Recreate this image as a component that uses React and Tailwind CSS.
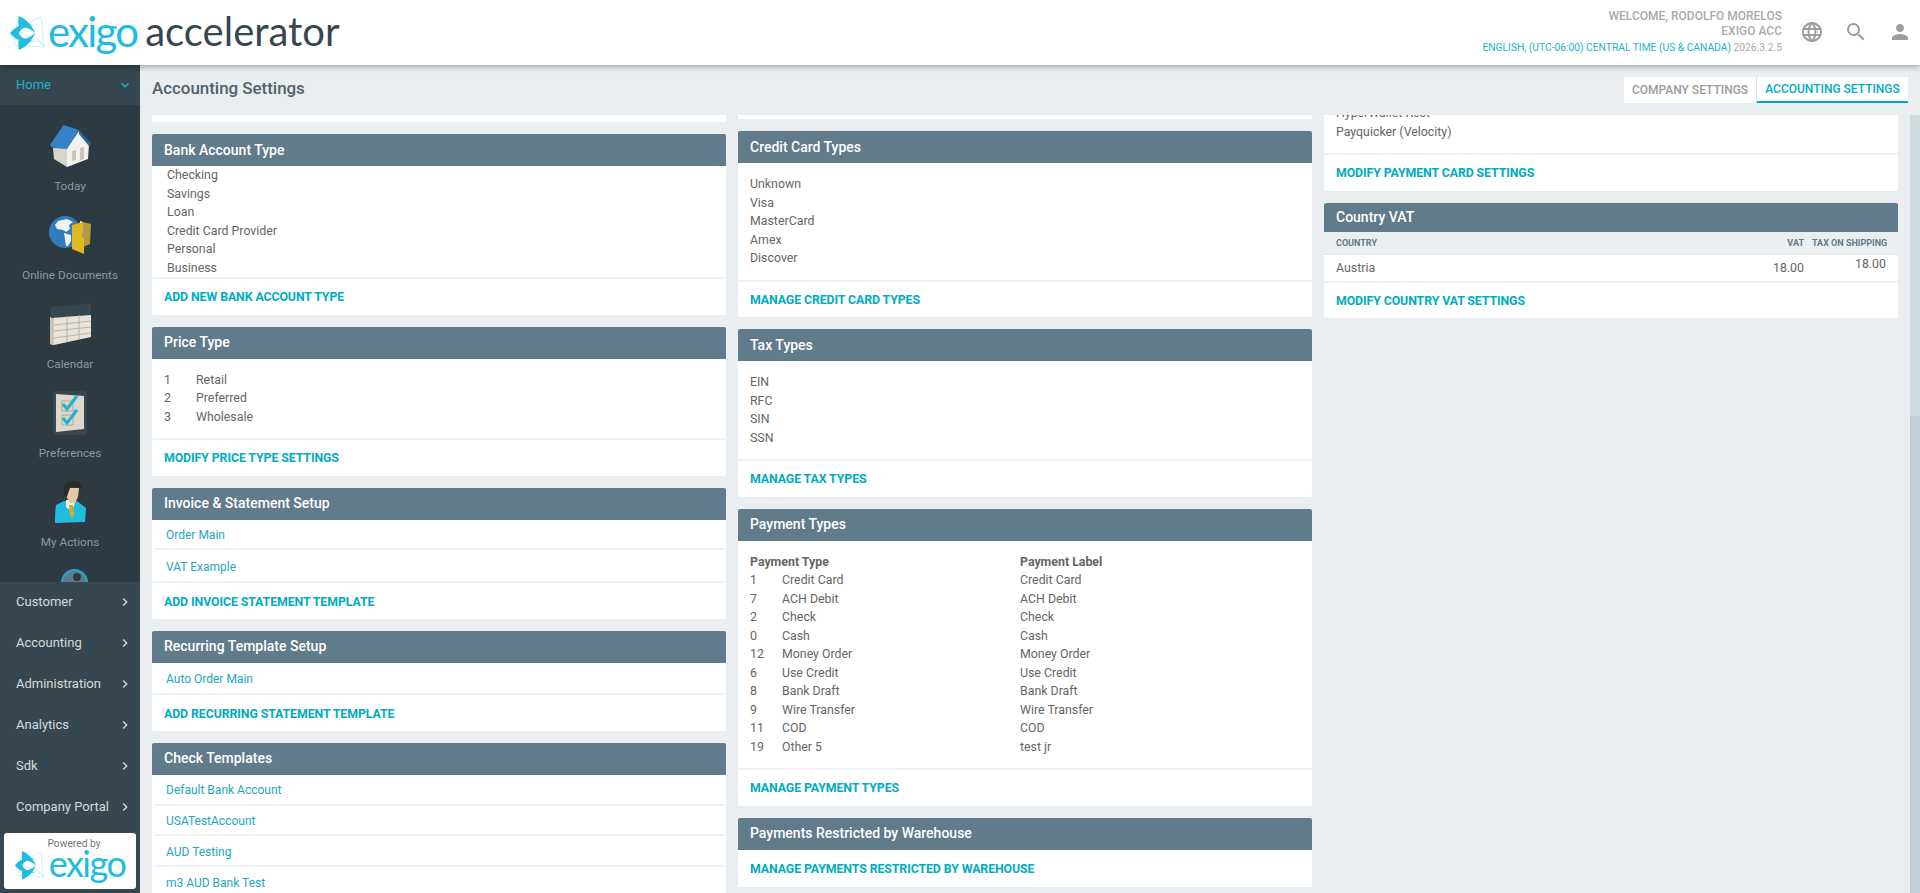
import { MdLanguage, MdSearch, MdPerson, MdKeyboardArrowRight, MdKeyboardArrowDown } from "react-icons/md";

const ExigoMark = ({ className }) => (
  <svg viewBox="0 0 36 34" className={className}>
    <path d="M8 0 L35 31 L4 29 Z M31 1 L34 29 L5 13 Z" fill="none" stroke="#a9e4f3" strokeWidth="0.6" />
    <path d="M0 17 C5 10 14 7 24 9 C15 10 10 13 9 17 C10 21 15 24 24 25 C14 27 5 24 0 17 Z" fill="#22bce0" />
    <path d="M9 0 C16 3 22 9 25 17 C20 12 14 10 9 12 C8 8 8 4 9 0 Z" fill="#22bce0" />
    <path d="M9 34 C16 31 22 25 25 17 C20 22 14 24 9 22 C8 26 8 30 9 34 Z" fill="#22bce0" />
  </svg>
);

const HouseIcon = () => (
  <svg viewBox="0 0 41 42" className="w-[41px] h-[42px]">
    <path d="M3 23 L17 23 L17 42 L4 34 Z" fill="#d9d5cc" />
    <path d="M17 23 L29 6 L39 19 L38 34 L17 42 Z" fill="#f3f1ee" />
    <path d="M22 26 L26 25 L26 35 L22 36 Z M30 23 L34 22 L34 34 L30 35 Z" fill="#c9c5ba" />
    <path d="M29 5 L41 18.5 L39 21 L29 9 Z" fill="#2a6496" />
    <path d="M0 20 L13.5 0 L29 5 L17 24 L3 23 Z" fill="#3582c4" />
  </svg>
);

const DocsIcon = () => (
  <svg viewBox="0 0 42 38" className="w-[42px] h-[38px]">
    <circle cx="16" cy="16" r="16" fill="#2f7cc0" />
    <path d="M9 5 L18 3 L24 6 L20 9 L21 13 L17 16 L14 14 L8 13 L6 9 Z" fill="#f1f4f6" />
    <path d="M15 17 L22 19 L22 25 L19 30 L17 30 L16 23 Z" fill="#f1f4f6" />
    <path d="M31 5 L34 6 L33 34 L29 34 Z" fill="#f3f1ee" />
    <path d="M34 6 L42 8 L41 28 L34 31 Z" fill="#b39a3f" />
    <path d="M23 9 L34 6 L33 20 L35 22 L35 38 L23 33 Z" fill="#dfb822" />
  </svg>
);

const CalendarIcon = () => (
  <svg viewBox="0 0 41 42" className="w-[41px] h-[42px]">
    <path d="M0 14 L41 10 L41 34 L4 42 L0 41 Z" fill="#e8e4da" />
    <path d="M0 14 L4 15 L4 42 L0 41 Z" fill="#c8c4b8" />
    <path d="M1 4 L41 0 L41 12 L1 15 Z" fill="#37474f" />
    <path d="M4 22 L41 18 M4 28 L41 24 M4 35 L41 30 M17 13 L17 39 M29 12 L29 36" stroke="#b9b5a9" strokeWidth="1" fill="none" />
  </svg>
);

const PrefsIcon = () => (
  <svg viewBox="0 0 34 44" className="w-[34px] h-[44px] shrink-0">
    <rect x="0" y="0" width="34" height="44" rx="4" fill="#37474f" />
    <path d="M3 3 L31 5 L31 38 L3 41 Z" fill="#ddd7cc" />
    <rect x="9" y="10" width="11" height="10" fill="none" stroke="#a9a69c" strokeWidth="1" />
    <rect x="9" y="24" width="11" height="10" fill="none" stroke="#a9a69c" strokeWidth="1" />
    <path d="M10 13 L14 18 L24 5" fill="none" stroke="#22b0d0" strokeWidth="3.2" />
    <path d="M10 27 L14 32 L24 19" fill="none" stroke="#22b0d0" strokeWidth="3.2" />
  </svg>
);

const ActionsIcon = () => (
  <svg viewBox="0 0 31 44" className="w-[31px] h-[44px] shrink-0">
    <path d="M9 21 L1 25 C0 32 0 38 0 43 L30 42 L31 28 L22 21 Z" fill="#22bce0" />
    <path d="M11 20 L20 20 L19 27 L15 30 L11 27 Z" fill="#f1efea" />
    <path d="M14 25 L18 25 L19 35 L17 38 L15 35 Z" fill="#d9ae1e" />
    <path d="M11 8 L24 8 L23 17 L20 23 L15 23 L11 16 Z" fill="#e6c9a4" />
    <path d="M10 16 C7 8 9 1 17 1 C22 0 27 2 27 8 C22 7 18 7 15 8 C14 11 13 13 12 17 Z" fill="#2b2b2b" />
  </svg>
);

const PartialIcon = () => (
  <svg viewBox="0 0 27 27" className="w-[27px] h-[27px]">
    <circle cx="13.5" cy="13.5" r="12.5" fill="#5a7d8e" stroke="#22a9c9" strokeWidth="2" />
    <circle cx="16" cy="8" r="4" fill="#2d3a42" />
  </svg>
);

const Card = ({ title, children, footer, small, border = true }) => (
  <div className="bg-white rounded-[2px] mb-3">
    <div className={`${small ? "h-[29px]" : "h-8"} bg-[#607b8a] rounded-t-[2px] flex items-center pl-3 text-[14px] font-medium text-white`}>
      {title}
    </div>
    {children}
    {footer && <CardFooter border={border}>{footer}</CardFooter>}
  </div>
);

const CardFooter = ({ children, border = true }) => (
  <div className={`h-[37.5px] pt-0.5 ${border ? "border-t-2 border-[#eff1f3]" : ""} flex items-center pl-3 text-[12.35px] font-bold uppercase text-[#00acc1] tracking-[-0.1px]`}>
    {children}
  </div>
);

const Lines = ({ items, className = "py-3 pl-3" }) => (
  <div className={`${className} text-[12.35px] leading-[18.5px] text-[#666]`}>
    {items.map((t) => (
      <div key={t}>{t}</div>
    ))}
  </div>
);

const NumLines = ({ items }) => (
  <div className="py-3 pl-3 text-[12.35px] leading-[18.5px] text-[#666]">
    {items.map(([n, t]) => (
      <div key={n} className="flex">
        <span className="w-8">{n}</span>
        <span>{t}</span>
      </div>
    ))}
  </div>
);

const LinkRows = ({ items, last }) => (
  <div>
    {items.map((t, i) => (
      <div
        key={t}
        className={`h-[30.8px] ml-0.5 pl-3 pt-0.5 flex items-center text-[12px] text-[#1ea7bf] ${i === items.length - 1 && !last ? "" : "border-b-2 border-[#eff1f3]"}`}
      >
        {t}
      </div>
    ))}
  </div>
);

const payments = [
  ["1", "Credit Card", "Credit Card"],
  ["7", "ACH Debit", "ACH Debit"],
  ["2", "Check", "Check"],
  ["0", "Cash", "Cash"],
  ["12", "Money Order", "Money Order"],
  ["6", "Use Credit", "Use Credit"],
  ["8", "Bank Draft", "Bank Draft"],
  ["9", "Wire Transfer", "Wire Transfer"],
  ["11", "COD", "COD"],
  ["19", "Other 5", "test jr"],
];

const navItems = ["Customer", "Accounting", "Administration", "Analytics", "Sdk", "Company Portal"];

const SideItem = ({ icon, label }) => (
  <div className="flex flex-col items-center">
    <div className="h-[42px] flex items-center justify-center">{icon}</div>
    <div className="text-[11.75px] leading-[18px] text-[#8f979c] mt-[10px] mb-[19px]">{label}</div>
  </div>
);

export default function App() {
  return (
    <div className="h-[893px] w-[1920px] overflow-hidden flex flex-col bg-[#ebeef1] font-['Roboto',sans-serif]">
      {/* Header */}
      <header className="h-[65px] shrink-0 bg-white flex items-center justify-between relative z-10 shadow-[0_2px_6px_rgba(0,0,0,0.3)]">
        <div className="flex items-center pl-[10px] font-['Lato',sans-serif]">
          <ExigoMark className="w-[36px] h-[34px] mt-[1px]" />
          <span className="ml-[2px] text-[42px] leading-none font-normal tracking-[-1.8px] text-[#1fbbe0] -mt-[4px]">exigo</span>
          <span className="ml-[8px] text-[40px] leading-none font-normal text-[#37474f] -mt-[4px]">accelerator</span>
        </div>
        <div className="flex items-center -mt-[2px]">
          <div className="text-right text-[#aaa] font-medium mr-[18px] uppercase">
            <div className="text-[12px] leading-[15px]">Welcome, Rodolfo Morelos</div>
            <div className="text-[12px] leading-[15px] mt-[0.5px]">Exigo Acc</div>
            <div className="text-[10.25px] leading-[15px] mt-[0.5px] font-normal">
              <span className="text-[#1cb3cb]">English, (UTC-06:00) Central Time (US &amp; Canada)</span> 2026.3.2.5
            </div>
          </div>
          <MdLanguage className="w-6 h-6 text-[#9e9e9e]" />
          <MdSearch className="w-6 h-6 text-[#9e9e9e] ml-5" />
          <MdPerson className="w-6 h-6 text-[#9e9e9e] ml-5 mr-2" />
        </div>
      </header>

      <div className="flex-1 flex min-h-0">
        {/* Sidebar */}
        <aside className="w-[140px] shrink-0 flex flex-col bg-[#2d3a42]">
          <div className="h-10 bg-[#37474f] flex items-center justify-between pl-4 pr-[7px] text-[13px] text-[#1cb3cb]">
            Home
            <MdKeyboardArrowDown className="w-4 h-4" />
          </div>
          <div className="h-[477px] overflow-hidden pt-5">
            <SideItem icon={<HouseIcon />} label="Today" />
            <SideItem icon={<DocsIcon />} label="Online Documents" />
            <SideItem icon={<CalendarIcon />} label="Calendar" />
            <SideItem icon={<PrefsIcon />} label="Preferences" />
            <SideItem icon={<ActionsIcon />} label="My Actions" />
            <div className="flex justify-center pl-[8px] -mt-[1px]">
              <PartialIcon />
            </div>
          </div>
          <div className="flex-1 bg-[#37474f]">
            <div className="-mt-[0.5px]">
              {navItems.map((n) => (
                <div key={n} className="h-[41px] flex items-center justify-between pl-4 pr-[7px] text-[13px] text-[#d6dadc]">
                  {n}
                  <MdKeyboardArrowRight className="w-4 h-4" />
                </div>
              ))}
            </div>
            <div className="mx-1 mt-[5.5px] h-14 bg-white rounded-[3px] flex flex-col items-center">
              <div className="text-[10.25px] leading-none text-[#777] mt-[6px] ml-2">Powered by</div>
              <div className="flex items-center mt-[2px] font-['Lato',sans-serif]">
                <ExigoMark className="w-[30px] h-[29px]" />
                <span className="ml-1 text-[36px] leading-[34px] font-normal tracking-[-1.5px] text-[#1fbbe0] -mt-[5px]">exigo</span>
              </div>
            </div>
          </div>
        </aside>

        {/* Main */}
        <main className="flex-1 min-w-0 flex flex-col">
          <div className="h-[50px] shrink-0 flex items-center justify-between pl-3 pr-3">
            <h1 className="text-[16.9px] font-medium text-[#50616b] -mt-[3px]">Accounting Settings</h1>
            <div className="flex bg-white rounded-[1px] h-[26px] text-[12px] font-medium uppercase">
              <div className="w-[133px] flex items-center justify-center text-[#9b9b9b] border-r border-[#dde1e4]">Company Settings</div>
              <div className="w-[151px] flex items-center justify-center text-[#00acc1] border-b-2 border-[#00acc1]">Accounting Settings</div>
            </div>
          </div>

          <div className="flex-1 min-h-0 flex pl-3 gap-3">
            {/* Column 1 */}
            <div className="w-[574px] overflow-hidden">
              <div className="h-[7px] bg-white mb-3" />
              <Card title="Bank Account Type" footer="Add New Bank Account Type">
                <Lines items={["Checking", "Savings", "Loan", "Credit Card Provider", "Personal", "Business"]} className="pl-[15px]" />
              </Card>
              <Card title="Price Type" footer="Modify Price Type Settings">
                <NumLines items={[["1", "Retail"], ["2", "Preferred"], ["3", "Wholesale"]]} />
              </Card>
              <Card title="Invoice &amp; Statement Setup" footer="Add Invoice Statement Template">
                <LinkRows items={["Order Main", "VAT Example"]} />
              </Card>
              <Card title="Recurring Template Setup" footer="Add Recurring Statement Template">
                <LinkRows items={["Auto Order Main"]} />
              </Card>
              <Card title="Check Templates">
                <LinkRows items={["Default Bank Account", "USATestAccount", "AUD Testing", "m3 AUD Bank Test"]} last />
              </Card>
            </div>

            {/* Column 2 */}
            <div className="w-[574px] overflow-hidden">
              <div className="h-1 bg-white mb-3" />
              <Card title="Credit Card Types" footer="Manage Credit Card Types">
                <Lines items={["Unknown", "Visa", "MasterCard", "Amex", "Discover"]} />
              </Card>
              <Card title="Tax Types" footer="Manage Tax Types">
                <Lines items={["EIN", "RFC", "SIN", "SSN"]} />
              </Card>
              <Card title="Payment Types" footer="Manage Payment Types">
                <div className="py-3 pl-3 text-[12.35px] leading-[18.5px] text-[#666] grid grid-cols-[270px_1fr]">
                  <div className="font-bold">Payment Type</div>
                  <div className="font-bold">Payment Label</div>
                  {payments.map(([n, t, l]) => (
                    <div key={n} className="contents">
                      <div className="flex">
                        <span className="w-8">{n}</span>
                        <span>{t}</span>
                      </div>
                      <div>{l}</div>
                    </div>
                  ))}
                </div>
              </Card>
              <Card title="Payments Restricted by Warehouse" footer="Manage Payments Restricted by Warehouse" border={false} />
            </div>

            {/* Column 3 */}
            <div className="w-[574px] overflow-hidden">
              <div className="bg-white rounded-b-[2px] -mt-[11px] mb-3">
                <Lines items={["HyperWallet Rest", "Payquicker (Velocity)"]} className="pl-3 pb-3" />
                <CardFooter>Modify Payment Card Settings</CardFooter>
              </div>
              <Card title="Country VAT" small footer="Modify Country VAT Settings">
                <div className="h-[23px] pt-0.5 bg-[#eceff1] border-b border-[#e3e7ea] flex items-center pl-3 pr-3 text-[9px] font-bold uppercase text-[#607b8a]">
                  <div className="flex-1">Country</div>
                  <div className="mr-2">VAT</div>
                  <div className="w-[74px] text-right whitespace-nowrap">Tax on Shipping</div>
                </div>
                <div className="h-[26px] pt-0.5 flex items-center pl-3 pr-3 text-[12.35px] text-[#666]">
                  <div className="flex-1">Austria</div>
                  <div className="mr-2">18.00</div>
                  <div className="w-[74px] text-right -mt-2">18.00</div>
                </div>
              </Card>
            </div>

            {/* Scrollbar */}
            <div className="w-[10px] bg-[#d0d9de]">
              <div className="mt-[301px] h-full bg-[#c3cdd3]" />
            </div>
          </div>
        </main>
      </div>
    </div>
  );
}
